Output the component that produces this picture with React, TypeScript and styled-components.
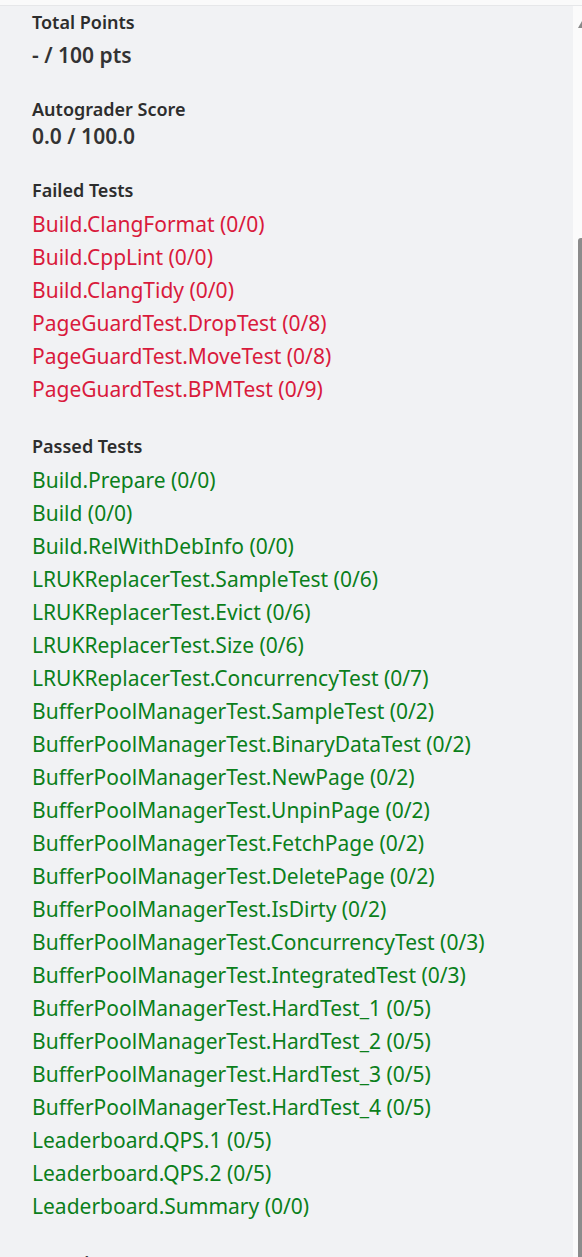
import React from "react";
import styled, { createGlobalStyle } from "styled-components";

const GlobalStyle = createGlobalStyle`
  html, body {
    margin: 0;
    padding: 0;
    background: #f1f2f4;
    font-family: "Noto Sans", "Open Sans", sans-serif;
    color: #2d2d2d;
  }
`;

const Page = styled.div`
  height: 1257px;
  display: flex;
  flex-direction: column;
  overflow: hidden;
`;

const TopBar = styled.div`
  height: 5px;
  flex-shrink: 0;
  background: #fafafa;
  border-bottom: 1px solid #e6e7e9;
`;

const Body = styled.div`
  flex: 1;
  display: flex;
  min-height: 0;
`;

const Content = styled.div`
  flex: 1;
  padding: 5px 0 0 32px;
`;

const Section = styled.section`
  & + & {
    margin-top: 29px;
  }
`;

const Label = styled.h3`
  margin: 0;
  font-size: 18px;
  line-height: 22px;
  font-weight: 600;
  color: #2d2d2d;
`;

const Value = styled.div<{ gap: number }>`
  margin-top: ${props => props.gap}px;
  font-size: 21px;
  line-height: 28px;
  font-weight: 600;
  color: #333;
`;

const TestList = styled.ul`
  list-style: none;
  margin: 7px 0 0;
  padding: 0;
`;

const TestItem = styled.li<{ passed: boolean }>`
  font-size: 21px;
  line-height: 33px;
  color: ${props => (props.passed ? "#0b7f1b" : "#d91a3c")};
`;

const Scrollbar = styled.div`
  width: 9px;
  flex-shrink: 0;
  background: #fbfbfb;
  display: flex;
  flex-direction: column;
  align-items: flex-end;
`;

const Arrow = styled.div`
  margin-top: 15px;
  width: 0;
  height: 0;
  border-left: 4px solid transparent;
  border-bottom: 7px solid #8a8a8a;
`;

const Thumb = styled.div`
  margin-top: 210px;
  width: 4px;
  flex: 1;
  background: #8c8c8c;
  border-radius: 3px 0 0 0;
`;

const failed = [
  "Build.ClangFormat (0/0)",
  "Build.CppLint (0/0)",
  "Build.ClangTidy (0/0)",
  "PageGuardTest.DropTest (0/8)",
  "PageGuardTest.MoveTest (0/8)",
  "PageGuardTest.BPMTest (0/9)"
];

const passed = [
  "Build.Prepare (0/0)",
  "Build (0/0)",
  "Build.RelWithDebInfo (0/0)",
  "LRUKReplacerTest.SampleTest (0/6)",
  "LRUKReplacerTest.Evict (0/6)",
  "LRUKReplacerTest.Size (0/6)",
  "LRUKReplacerTest.ConcurrencyTest (0/7)",
  "BufferPoolManagerTest.SampleTest (0/2)",
  "BufferPoolManagerTest.BinaryDataTest (0/2)",
  "BufferPoolManagerTest.NewPage (0/2)",
  "BufferPoolManagerTest.UnpinPage (0/2)",
  "BufferPoolManagerTest.FetchPage (0/2)",
  "BufferPoolManagerTest.DeletePage (0/2)",
  "BufferPoolManagerTest.IsDirty (0/2)",
  "BufferPoolManagerTest.ConcurrencyTest (0/3)",
  "BufferPoolManagerTest.IntegratedTest (0/3)",
  "BufferPoolManagerTest.HardTest_1 (0/5)",
  "BufferPoolManagerTest.HardTest_2 (0/5)",
  "BufferPoolManagerTest.HardTest_3 (0/5)",
  "BufferPoolManagerTest.HardTest_4 (0/5)",
  "Leaderboard.QPS.1 (0/5)",
  "Leaderboard.QPS.2 (0/5)",
  "Leaderboard.Summary (0/0)"
];

const App: React.FC = () => (
  <Page>
    <GlobalStyle />
    <TopBar />
    <Body>
      <Content>
        <Section>
          <Label>Total Points</Label>
          <Value gap={8}>- / 100 pts</Value>
        </Section>
        <Section>
          <Label>Autograder Score</Label>
          <Value gap={2}>0.0 / 100.0</Value>
        </Section>
        <Section>
          <Label>Failed Tests</Label>
          <TestList>
            {failed.map(name => (
              <TestItem key={name} passed={false}>
                {name}
              </TestItem>
            ))}
          </TestList>
        </Section>
        <Section>
          <Label>Passed Tests</Label>
          <TestList>
            {passed.map(name => (
              <TestItem key={name} passed>
                {name}
              </TestItem>
            ))}
          </TestList>
        </Section>
        <Section>
          <Label>Question 2</Label>
        </Section>
      </Content>
      <Scrollbar>
        <Arrow />
        <Thumb />
      </Scrollbar>
    </Body>
  </Page>
);

export default App;
